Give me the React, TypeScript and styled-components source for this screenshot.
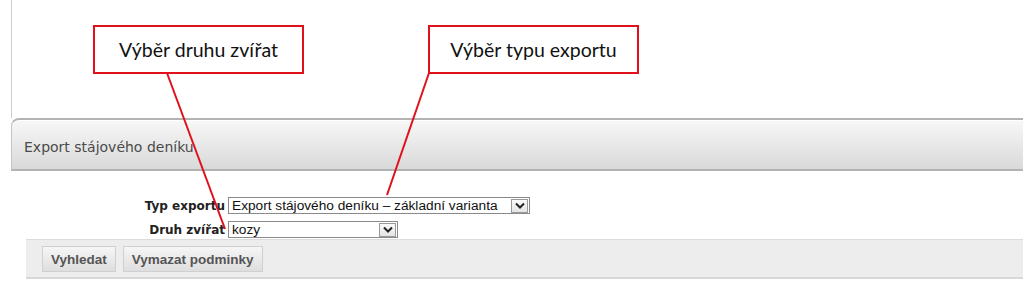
import styled, { createGlobalStyle } from "styled-components";

const GlobalStyle = createGlobalStyle`
  html, body {
    margin: 0;
    padding: 0;
    background: #fff;
    overflow: hidden;
  }
`;

const Page = styled.div`
  position: relative;
  width: 1023px;
  height: 298px;
  overflow: hidden;
`;

const TopArea = styled.div`
  margin-left: 11px;
  height: 118px;
  border-left: 1px solid #cfcfcf;
`;

const Panel = styled.div`
  margin-left: 11px;
`;

const PanelHeader = styled.div`
  display: flex;
  align-items: center;
  box-sizing: border-box;
  height: 53px;
  padding: 5px 0 0 12px;
  border-top: 2px solid #b3b3b3;
  border-bottom: 2px solid #b3b3b3;
  border-left: 1px solid #c4c4c4;
  border-top-left-radius: 8px;
  background: linear-gradient(#f8f8f8, #d9d9d9);
  box-shadow: inset 0 1px 0 #ffffff;
  font-family: "DejaVu Sans", Verdana, sans-serif;
  font-size: 14px;
  color: #4a4a4a;
`;

const Form = styled.div`
  display: grid;
  grid-template-columns: 214px auto;
  column-gap: 3px;
  row-gap: 7px;
  padding-top: 26px;
  align-items: center;
`;

const Label = styled.label`
  text-align: right;
  font-family: "DejaVu Sans", Verdana, sans-serif;
  font-weight: bold;
  font-size: 12px;
  color: #222;
`;

const Select = styled.div<{ $width: number }>`
  display: flex;
  align-items: center;
  justify-content: space-between;
  box-sizing: border-box;
  width: ${(p) => p.$width}px;
  height: 17px;
  padding: 0 1px 0 3px;
  border: 1px solid #8a8a8a;
  background: #fff;
  font-family: "Liberation Sans", Arial, sans-serif;
  font-size: 13.7px;
  color: #111;
`;

const Arrow = styled.span`
  display: flex;
  align-items: center;
  justify-content: center;
  box-sizing: border-box;
  width: 17px;
  height: 14px;
  border: 1px solid #9a9a9a;
  background: linear-gradient(#fafafa, #e4e4e4);
`;

const ButtonBar = styled.div`
  display: flex;
  gap: 7px;
  margin-top: 1px;
  margin-left: 15px;
  padding: 6px 0 5px 16px;
  border-top: 1px solid #dcdcdc;
  border-bottom: 2px solid #d8d8d8;
  background: #ededed;
`;

const Button = styled.button`
  height: 26px;
  padding: 0 8px;
  border: 1px solid #d0d0d0;
  background: linear-gradient(#f6f6f6, #dedede);
  font-family: "Liberation Sans", Arial, sans-serif;
  font-weight: bold;
  font-size: 13.5px;
  color: #555;
`;

const Callout = styled.div<{ $left: number }>`
  position: absolute;
  top: 25px;
  left: ${(p) => p.$left}px;
  box-sizing: border-box;
  width: 211px;
  height: 49px;
  display: flex;
  align-items: center;
  justify-content: center;
  border: 2px solid #e0111b;
  background: #fff;
  font-family: Lato, "Open Sans", sans-serif;
  font-size: 19.5px;
  color: #111;
`;

const Overlay = styled.svg`
  position: absolute;
  inset: 0;
  pointer-events: none;
`;

function Chevron() {
  return (
    <svg width="10" height="7" viewBox="0 0 10 7">
      <path d="M1 1.5 L5 5.5 L9 1.5" fill="none" stroke="#222" strokeWidth="2" />
    </svg>
  );
}

export default function App() {
  return (
    <>
      <GlobalStyle />
      <Page>
        <TopArea />
        <Panel>
          <PanelHeader>Export stájového deníku</PanelHeader>
          <Form>
            <Label>Typ exportu</Label>
            <Select $width={302}>
              <span>Export stájového deníku – základní varianta</span>
              <Arrow>
                <Chevron />
              </Arrow>
            </Select>
            <Label>Druh zvířat</Label>
            <Select $width={170}>
              <span>kozy</span>
              <Arrow>
                <Chevron />
              </Arrow>
            </Select>
          </Form>
          <ButtonBar>
            <Button>Vyhledat</Button>
            <Button>Vymazat podminky</Button>
          </ButtonBar>
        </Panel>
        <Callout $left={93}>Výběr druhu zvířat</Callout>
        <Callout $left={428}>Výběr typu exportu</Callout>
        <Overlay width="1023" height="298">
          <line x1="167" y1="73" x2="225" y2="229" stroke="#e0111b" strokeWidth="2" />
          <line x1="429" y1="73" x2="387" y2="195" stroke="#e0111b" strokeWidth="2" />
        </Overlay>
      </Page>
    </>
  );
}
